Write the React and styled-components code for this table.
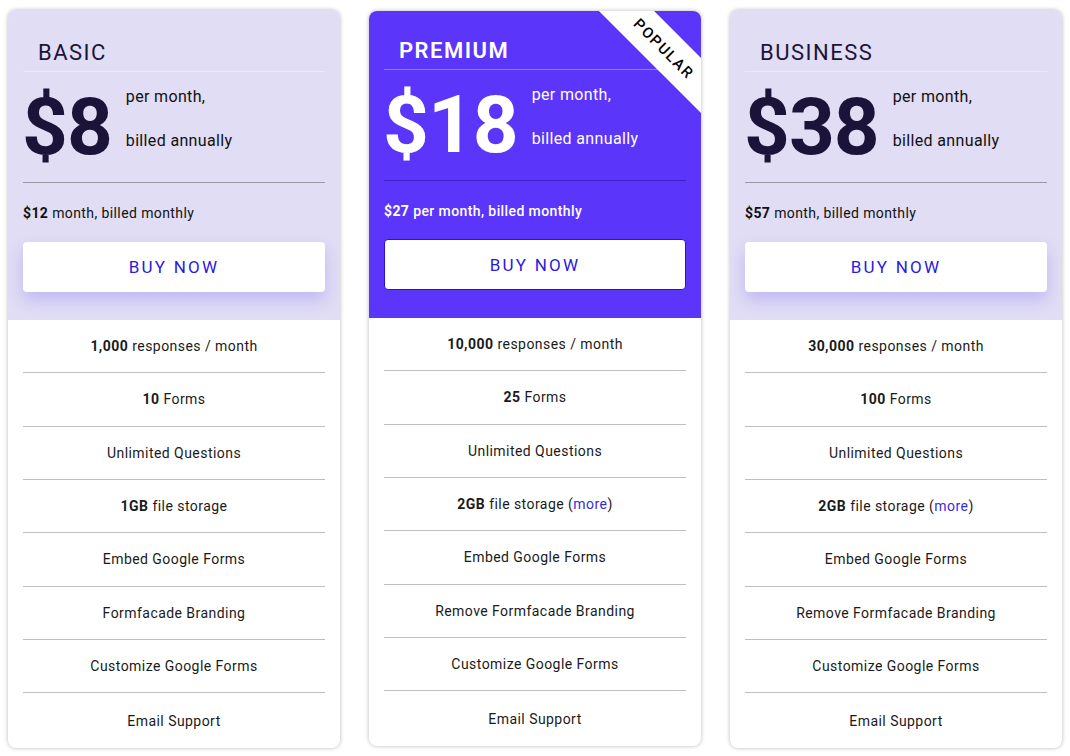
import * as React from 'react';
import styled, { createGlobalStyle, css } from 'styled-components';

const GlobalStyle = createGlobalStyle`
    body {
        margin: 0;
        background: #ffffff;
        font-family: Roboto, 'Liberation Sans', sans-serif;
    }
`;

const Page = styled.div`
    display: flex;
    gap: 29px;
    padding: 10px 8px;
    align-items: flex-start;
`;

const Card = styled.div`
    position: relative;
    width: 332px;
    border-radius: 8px;
    overflow: hidden;
    background: #ffffff;
    box-shadow: 0 0 4px rgba(0, 0, 0, 0.28);
    ${(props) =>
        props.featured &&
        css`
            margin-top: 1px;
        `}
`;

const Header = styled.div`
    background: ${(props) => (props.featured ? '#5c35fa' : '#e0ddf4')};
    color: ${(props) => (props.featured ? '#ffffff' : '#1c1438')};
    padding: 0 15px 28px;
`;

const Title = styled.div`
    padding: ${(props) => (props.featured ? '27px' : '30px')} 15px 5px;
    font-size: 22px;
    line-height: 26px;
    font-weight: ${(props) => (props.featured ? 600 : 400)};
    letter-spacing: 1.5px;
    border-bottom: 1px solid rgba(255, 255, 255, 0.35);
`;

const PriceRow = styled.div`
    display: flex;
    align-items: flex-start;
    gap: 14px;
    padding: 3px 0 15px;
    border-bottom: 1px solid ${(props) => (props.featured ? 'rgba(40, 10, 160, 0.55)' : '#9a98a4')};
`;

const Amount = styled.div`
    margin-top: 12px;
    margin-left: -1px;
    font-size: 80px;
    line-height: 80px;
    font-weight: 700;
    letter-spacing: -1px;
`;

const Note = styled.div`
    font-size: 16px;
    line-height: 44px;
    letter-spacing: 0.35px;
    color: ${(props) => (props.featured ? '#ffffff' : '#111111')};
`;

const Monthly = styled.div`
    margin-top: 20px;
    font-size: 14px;
    line-height: 20px;
    letter-spacing: 0.4px;
    font-weight: ${(props) => (props.featured ? 500 : 400)};
    color: ${(props) => (props.featured ? '#ffffff' : '#111111')};

    b {
        font-weight: 700;
    }
`;

const BuyButton = styled.button`
    display: flex;
    align-items: center;
    justify-content: center;
    width: 100%;
    height: ${(props) => (props.featured ? '51px' : '50px')};
    margin-top: ${(props) => (props.featured ? '18px' : '19px')};
    border: ${(props) => (props.featured ? '1px solid #2a14c8' : 'none')};
    border-radius: 4px;
    background: #ffffff;
    color: #2a1adf;
    font-family: Roboto, 'Liberation Sans', sans-serif;
    font-size: 17px;
    letter-spacing: 2.2px;
    box-shadow: ${(props) => (props.featured ? 'none' : '0 8px 16px rgba(110, 90, 240, 0.28)')};
    cursor: pointer;
`;

const Features = styled.ul`
    list-style: none;
    margin: 0;
    padding: 0 15px;
`;

const Feature = styled.li`
    box-sizing: border-box;
    display: flex;
    align-items: center;
    justify-content: center;
    height: 53.33px;
    font-size: 14px;
    letter-spacing: 0.45px;
    color: #1a1a1a;
    border-bottom: 1px solid #bdbdc4;

    &:last-child {
        border-bottom: none;
        height: 55px;
    }

    b {
        font-weight: 700;
        margin-right: 4px;
    }
`;

const More = styled.span`
    color: #3a2bd8;
`;

const Ribbon = styled.div`
    position: absolute;
    top: 18px;
    left: 215px;
    width: 160px;
    height: 39px;
    display: flex;
    align-items: center;
    justify-content: center;
    background: #ffffff;
    color: #000000;
    font-size: 15px;
    font-weight: 500;
    letter-spacing: 1.6px;
    transform: rotate(45deg);
`;

const plans = [
    {
        name: 'BASIC',
        price: '$8',
        monthly: '$12',
        monthlyText: 'month, billed monthly',
        responses: '1,000',
        forms: '10',
        storage: '1GB',
        more: false,
        branding: 'Formfacade Branding',
    },
    {
        name: 'PREMIUM',
        price: '$18',
        monthly: '$27',
        monthlyText: 'per month, billed monthly',
        responses: '10,000',
        forms: '25',
        storage: '2GB',
        more: true,
        branding: 'Remove Formfacade Branding',
        featured: true,
    },
    {
        name: 'BUSINESS',
        price: '$38',
        monthly: '$57',
        monthlyText: 'month, billed monthly',
        responses: '30,000',
        forms: '100',
        storage: '2GB',
        more: true,
        branding: 'Remove Formfacade Branding',
    },
];

const PlanCard = ({ plan }) => {
    const { featured } = plan;
    return (
        <Card featured={featured}>
            <Header featured={featured}>
                <Title featured={featured}>{plan.name}</Title>
                <PriceRow featured={featured}>
                    <Amount>{plan.price}</Amount>
                    <Note featured={featured}>
                        per month,
                        <br />
                        billed annually
                    </Note>
                </PriceRow>
                <Monthly featured={featured}>
                    <b>{plan.monthly}</b> {plan.monthlyText}
                </Monthly>
                <BuyButton featured={featured}>BUY NOW</BuyButton>
            </Header>
            <Features>
                <Feature>
                    <b>{plan.responses}</b> responses / month
                </Feature>
                <Feature>
                    <b>{plan.forms}</b> Forms
                </Feature>
                <Feature>Unlimited Questions</Feature>
                <Feature>
                    <b>{plan.storage}</b> file storage
                    {plan.more && (
                        <span>
                            &nbsp;(<More>more</More>)
                        </span>
                    )}
                </Feature>
                <Feature>Embed Google Forms</Feature>
                <Feature>{plan.branding}</Feature>
                <Feature>Customize Google Forms</Feature>
                <Feature>Email Support</Feature>
            </Features>
            {featured && <Ribbon>POPULAR</Ribbon>}
        </Card>
    );
};

const App = () => (
    <>
        <GlobalStyle />
        <Page>
            {plans.map((plan) => (
                <PlanCard key={plan.name} plan={plan} />
            ))}
        </Page>
    </>
);

export default App;
